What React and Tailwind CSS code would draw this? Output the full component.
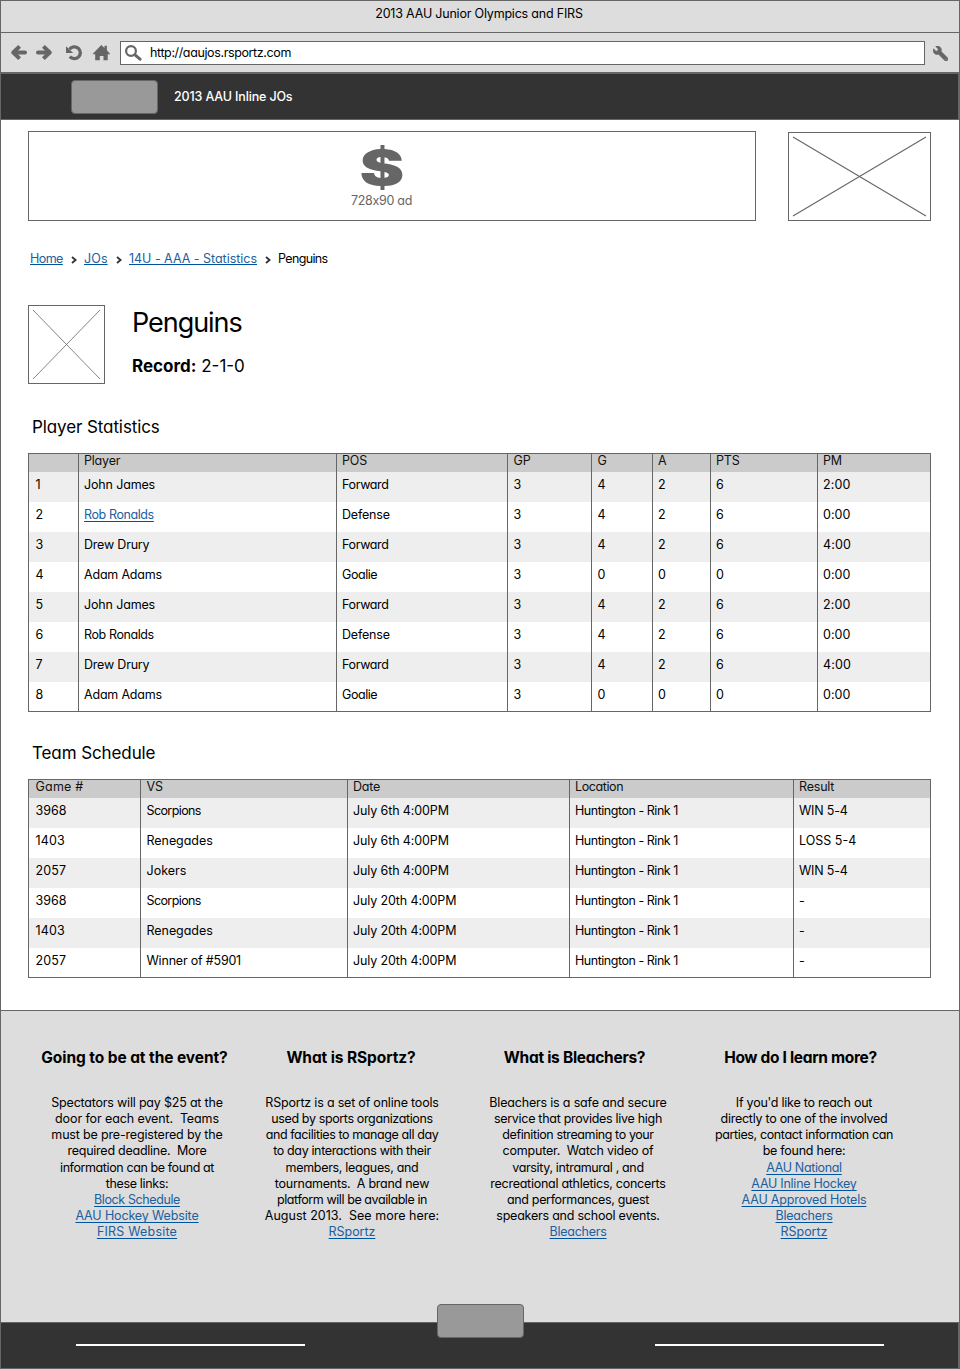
import React from "react";
import { FaWrench } from "react-icons/fa";

const stats = [
  ["1", "John James", "Forward", "3", "4", "2", "6", "2:00"],
  ["2", "Rob Ronalds", "Defense", "3", "4", "2", "6", "0:00"],
  ["3", "Drew Drury", "Forward", "3", "4", "2", "6", "4:00"],
  ["4", "Adam Adams", "Goalie", "3", "0", "0", "0", "0:00"],
  ["5", "John James", "Forward", "3", "4", "2", "6", "2:00"],
  ["6", "Rob Ronalds", "Defense", "3", "4", "2", "6", "0:00"],
  ["7", "Drew Drury", "Forward", "3", "4", "2", "6", "4:00"],
  ["8", "Adam Adams", "Goalie", "3", "0", "0", "0", "0:00"],
];

const statColumns = [
  { title: "", cls: "w-[50px] pl-[6.5px]" },
  { title: "Player", cls: "w-[258px] pl-[5px]" },
  { title: "POS", cls: "w-[171px] pl-[5px]" },
  { title: "GP", cls: "w-[84px] pl-[5.5px]" },
  { title: "G", cls: "w-[61px] pl-[5.5px]" },
  { title: "A", cls: "w-[58px] pl-[5px]" },
  { title: "PTS", cls: "w-[107px] pl-[5px]" },
  { title: "PM", cls: "w-[114px] pl-[5px] border-r" },
];

const games = [
  ["3968", "Scorpions", "July 6th 4:00PM", "Huntington - Rink 1", "WIN 5-4"],
  ["1403", "Renegades", "July 6th 4:00PM", "Huntington - Rink 1", "LOSS 5-4"],
  ["2057", "Jokers", "July 6th 4:00PM", "Huntington - Rink 1", "WIN 5-4"],
  ["3968", "Scorpions", "July 20th 4:00PM", "Huntington - Rink 1", "-"],
  ["1403", "Renegades", "July 20th 4:00PM", "Huntington - Rink 1", "-"],
  ["2057", "Winner of #5901", "July 20th 4:00PM", "Huntington - Rink 1", "-"],
];

const gameColumns = [
  { title: "Game #", cls: "w-[112px] pl-[6.5px]" },
  { title: "VS", cls: "w-[207px] pl-[5.5px]" },
  { title: "Date", cls: "w-[222px] pl-[5px]" },
  { title: "Location", cls: "w-[224px] pl-[5px]" },
  { title: "Result", cls: "w-[138px] pl-[5px] border-r" },
];

const tracking = {
  "Game #": "tracking-[0.2px]",
  Player: "tracking-[-0.2px]",
  Location: "tracking-[-0.4px]",
  Forward: "tracking-[-0.35px]",
  Defense: "tracking-[-0.2px]",
  "Rob Ronalds": "tracking-[-0.4px]",
  "John James": "tracking-[-0.15px]",
  "Adam Adams": "tracking-[-0.2px]",
  Goalie: "tracking-[-0.45px]",
  Scorpions: "tracking-[-0.6px]",
  Renegades: "tracking-[-0.05px]",
  Jokers: "tracking-[0px]",
  "3968": "tracking-[0.05px]",
  "1403": "tracking-[0.15px]",
  "2057": "tracking-[0.1px]",
  "2:00": "tracking-[0.15px]",
  "0:00": "tracking-[0.05px]",
  "4:00": "tracking-[0.15px]",
  "July 6th 4:00PM": "tracking-[-0.12px]",
  "July 20th 4:00PM": "tracking-[-0.14px]",
  "Huntington - Rink 1": "tracking-[-0.47px]",
  "WIN 5-4": "tracking-[-0.2px]",
  "LOSS 5-4": "tracking-[0px]",
};

const footer = [
  {
    title: "Going to be at the event?",
    cls: "w-[272px]",
    head: "mr-[5px] tracking-[-0.08px]",
    lines: [
      ["Spectators will pay $25 at the", "tracking-[-0.2px]"],
      ["door for each event.  Teams", "tracking-[-0.1px]"],
      ["must be pre-registered by the", "tracking-[-0.17px]"],
      ["required deadline.  More", "tracking-[-0.25px]"],
      ["information can be found at", "tracking-[-0.4px]"],
      ["these links:", "tracking-[-0.35px]"],
    ],
    links: [
      ["Block Schedule", "tracking-[-0.4px]"],
      ["AAU Hockey Website", "tracking-[-0.14px]"],
      ["FIRS Website", "tracking-[0.2px]"],
    ],
  },
  {
    title: "What is RSportz?",
    cls: "w-[158px]",
    head: "mr-[2px] tracking-[-0.1px]",
    lines: [
      ["RSportz is a set of online tools", "tracking-[-0.2px]"],
      ["used by sports organizations", "tracking-[-0.37px]"],
      ["and facilities to manage all day", "tracking-[-0.4px]"],
      ["to day interactions with their", "tracking-[-0.37px]"],
      ["members, leagues, and", "tracking-[-0.3px]"],
      ["tournaments.  A brand new", "tracking-[-0.26px]"],
      ["platform will be available in", "tracking-[-0.42px]"],
      ["August 2013.  See more here:", "tracking-[0.02px]"],
    ],
    links: [["RSportz", "tracking-[-0.05px]"]],
  },
  {
    title: "What is Bleachers?",
    cls: "w-[294px]",
    head: "mr-[7px] tracking-[-0.28px]",
    lines: [
      ["Bleachers is a safe and secure", "tracking-[-0.18px]"],
      ["service that provides live high", "tracking-[-0.29px]"],
      ["definition streaming to your", "tracking-[-0.4px]"],
      ["computer.  Watch video of", "tracking-[-0.2px]"],
      ["varsity, intramural , and", "tracking-[-0.35px]"],
      ["recreational athletics, concerts", "tracking-[-0.27px]"],
      ["and performances, guest", "tracking-[-0.34px]"],
      ["speakers and school events.", "tracking-[-0.22px]"],
    ],
    links: [["Bleachers", "tracking-[-0.25px]"]],
  },
  {
    title: "How do I learn more?",
    cls: "w-[158px]",
    head: "mr-[7px] tracking-[-0.32px]",
    lines: [
      ["If you'd like to reach out", "tracking-[-0.25px]"],
      ["directly to one of the involved", "tracking-[-0.27px]"],
      ["parties, contact information can", "tracking-[-0.38px]"],
      ["be found here:", "tracking-[-0.25px]"],
    ],
    links: [
      ["AAU National", "tracking-[-0.35px]"],
      ["AAU Inline Hockey", "tracking-[-0.25px]"],
      ["AAU Approved Hotels", "tracking-[-0.2px]"],
      ["Bleachers", "tracking-[-0.25px]"],
      ["RSportz", "tracking-[-0.05px]"],
    ],
  },
];

function Link({ children, className = "" }) {
  return (
    <a
      href="#"
      className={`text-[#1b609f] underline decoration-[#00539f] decoration-1 [text-decoration-skip-ink:none] ${className}`}
    >
      {children}
    </a>
  );
}

function Chevron({ className }) {
  return (
    <svg className={`mt-px shrink-0 ${className}`} width="6" height="8" viewBox="0 0 6 8" fill="none" stroke="#333" strokeWidth="1.8">
      <path d="M1 1l3.600 3L1 7" />
    </svg>
  );
}

function Placeholder({ w, h, stroke, className = "" }) {
  return (
    <div className={`border border-[#666] bg-white ${className}`}>
      <svg className="block" width={w - 2} height={h - 2} stroke="#666" strokeWidth={stroke}>
        <path d={`M4 4 L${w - 6} ${h - 6} M${w - 6} 4 L4 ${h - 6}`} />
      </svg>
    </div>
  );
}

function Table({ columns, rows, linkAt }) {
  return (
    <table className="w-[903px] table-fixed border-separate border-spacing-0 text-left">
      <thead>
        <tr className="h-[19px] bg-[#cbcbcb]">
          {columns.map((c, i) => (
            <th
              key={i}
              className={`border-l border-t border-[#666] py-0 pb-[4px] align-top font-normal leading-[14px] text-[#111] ${c.cls} ${tracking[c.title] || ""}`}
            >
              {c.title}
            </th>
          ))}
        </tr>
      </thead>
      <tbody>
        {rows.map((row, r) => {
          const last = r === rows.length - 1;
          return (
            <tr key={r} className={r % 2 ? "bg-white" : "bg-[#eee]"}>
              {row.map((v, i) => (
                <td
                  key={i}
                  className={`h-[30px] border-l border-[#666] py-0 align-top leading-[26px] ${columns[i].cls} ${last ? "border-b" : ""} ${tracking[v] || ""}`}
                >
                  {linkAt && linkAt[0] === r && linkAt[1] === i ? (
                    <Link className="underline-offset-2">{v}</Link>
                  ) : (
                    v
                  )}
                </td>
              ))}
            </tr>
          );
        })}
      </tbody>
    </table>
  );
}

function Toolbar() {
  return (
    <div className="flex h-[39px] items-start bg-[#ddd] pl-[9px] pt-2">
      <div className="flex h-6 w-[110px] items-center text-[#666]">
        <svg width="18" height="16" viewBox="0 0 18 16" fill="none" stroke="currentColor" strokeWidth="4" strokeLinejoin="round">
          <path d="M4 7.500h11" strokeLinecap="round" />
          <path d="M9.600 1.400L3.300 7.500l6.300 6.100" />
        </svg>
        <svg className="ml-[7px]" width="18" height="16" viewBox="0 0 18 16" fill="none" stroke="currentColor" strokeWidth="4" strokeLinejoin="round">
          <path d="M3 7.500h11" strokeLinecap="round" />
          <path d="M8.400 1.400l6.300 6.100-6.300 6.100" />
        </svg>
        <svg className="ml-[12px]" width="18" height="16" viewBox="0 0 18 16" fill="none" stroke="currentColor">
          <path d="M4.500 4.200A6 5.900 0 1 1 4.800 11.600" strokeWidth="3.300" />
          <path d="M1 1.200v6.800h7.200z" fill="currentColor" stroke="none" />
        </svg>
        <svg className="ml-[9px]" width="18" height="16" viewBox="0 0 18 16" fill="currentColor">
          <path d="M9.300 0l3.200 3V.8h2.400v4.500l3.100 3.500v.5h-2.300v6h-4.200v-4.400H7.800v4.400H3.200v-6H.8v-.5z" />
        </svg>
      </div>
      <div className="flex h-6 w-[805px] items-center border border-[#666] bg-white pl-[4px]">
        <svg width="17" height="16" viewBox="0 0 17 16" fill="none" stroke="#666">
          <circle cx="6" cy="6" r="4.900" strokeWidth="2.200" />
          <path d="M10 9.800l5 4.400" strokeWidth="3" strokeLinecap="round" />
        </svg>
        <span className="ml-[8px] tracking-[-0.38px]">http://aaujos.rsportz.com</span>
      </div>
      <FaWrench className="ml-[8px] mt-[5px] h-[15px] w-[15px] -scale-x-100 stroke-[#666] stroke-[24px] text-[#666]" />
    </div>
  );
}

export default function App() {
  return (
    <div className="flex h-[1369px] w-[960px] flex-col border border-[#666] bg-white font-['Inter',sans-serif] text-[12.5px] tracking-[-0.2px] text-black [font-feature-settings:'cv11']">
      <div className="h-[32px] border-b border-[#666] bg-[#ddd] pr-[2px] text-center leading-[25px]">
        2013 AAU Junior Olympics and FIRS
      </div>
      <Toolbar />
      <div className="flex h-12 shrink-0 items-center border-b border-r border-t-2 border-[#666] bg-[#333] pl-[70px]">
        <div className="h-[34px] w-[87px] rounded-[4px] border border-[#666] bg-[#999]" />
        <span className="ml-[16px] mt-[2px] font-medium tracking-[-0.15px] text-white">2013 AAU Inline JOs</span>
      </div>

      <main className="flex h-[890px] shrink-0 flex-col pl-[27px] pr-[28px]">
        <div className="flex justify-between pt-[11px]">
          <div className="flex h-[90px] w-[728px] flex-col items-center border border-[#666] pr-[21px] text-[#666]">
            <span className="mt-[11px] block h-[50px] scale-x-[1.4] text-[48px] font-black leading-[49px] tracking-normal">$</span>
            <span className="leading-4 tracking-[-0.3px]">728x90 ad</span>
          </div>
          <Placeholder w={143} h={89} stroke={1.1} className="mt-px" />
        </div>

        <nav className="mt-[29px] flex h-[18px] items-center whitespace-pre pl-[2px] leading-[18px]">
          <Link className="w-[33px] tracking-[-0.55px] underline-offset-1">Home</Link>
          <Chevron className="ml-[8px] mr-[7px]" />
          <Link className="w-[24px] tracking-[0.1px] underline-offset-1">JOs</Link>
          <Chevron className="ml-[8px] mr-[7px]" />
          <Link className="w-[128px] tracking-[-0.02px] underline-offset-1">14U - AAA - Statistics</Link>
          <Chevron className="ml-[8px] mr-[7px]" />
          <span className="tracking-[-0.65px]">Penguins</span>
        </nav>

        <div className="mt-[37px] flex">
          <Placeholder w={77} h={79} stroke={0.8} />
          <div className="ml-[27px] flex flex-col">
            <h1 className="mt-px text-[27px] font-normal leading-[34px] tracking-[-1.05px]">Penguins</h1>
            <p className="mt-[14px] text-[17px] leading-6 tracking-normal">
              <b>Record:</b> 2-1-0
            </p>
          </div>
        </div>

        <h2 className="mb-[14px] mt-[31px] pl-[4px] text-[17px] leading-6 tracking-[-0.1px]">Player Statistics</h2>
        <Table columns={statColumns} rows={stats} linkAt={[1, 1]} />
        <h2 className="mb-[14px] mt-[29px] pl-[4px] text-[17px] leading-6 tracking-[-0.1px]">Team Schedule</h2>
        <Table columns={gameColumns} rows={games} />
      </main>

      <footer className="flex h-[312px] shrink-0 border-t border-[#666] bg-[#ddd] pt-[37px]">
        {footer.map((col) => (
          <section key={col.title} className={`flex flex-col items-center whitespace-pre ${col.cls}`}>
            <h3 className={`text-[15.5px] font-bold leading-5 ${col.head}`}>{col.title}</h3>
            <div className="mt-[27px] flex flex-col items-center leading-4">
              {col.lines.map(([t, cls], i) => (
                <p key={t} className={`${cls} ${i === 4 ? "mt-px" : ""}`}>
                  {t}
                </p>
              ))}
              {col.links.map(([t, cls], i) => (
                <Link key={t} className={`underline-offset-2 ${cls} ${col.lines.length + i === 4 ? "mt-px" : ""}`}>
                  {t}
                </Link>
              ))}
            </div>
          </section>
        ))}
      </footer>
      <div className="flex h-[46px] shrink-0 items-start justify-between border-r border-t border-[#666] bg-[#333] pl-[75px] pr-[74px]">
        <div className="mt-[21px] h-[2px] w-[229px] bg-white" />
        <div className="-mt-[19px] h-[34px] w-[87px] rounded-[4px] border border-[#666] bg-[#999]" />
        <div className="mt-[21px] h-[2px] w-[229px] bg-white" />
      </div>
    </div>
  );
}
